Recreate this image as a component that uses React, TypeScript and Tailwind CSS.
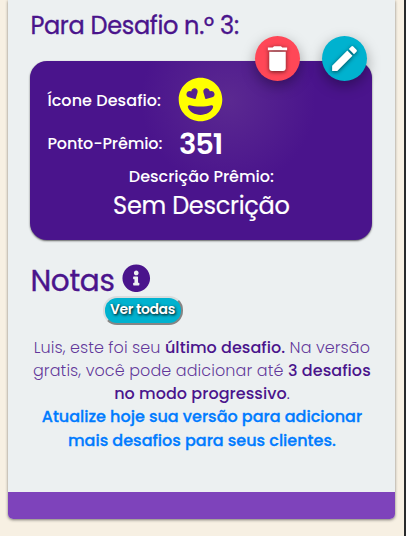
import React from 'react';
import { FaGrinHearts, FaInfoCircle } from 'react-icons/fa';
import { MdDelete, MdEdit } from 'react-icons/md';

function ActionButton({ label, className, children }: { label: string; className: string; children: React.ReactNode }) {
  return (
    <button
      aria-label={label}
      className={`flex h-[45px] w-[45px] items-center justify-center rounded-full text-white shadow-[0_5px_14px_rgba(0,0,0,0.35)] ${className}`}
    >
      {children}
    </button>
  );
}

function PrizeCard() {
  return (
    <section className="relative mt-[20px] h-[179px] w-[342px] rounded-[17px] bg-[#4a148c] bg-[radial-gradient(circle_at_58%_22%,#5b2991_0%,#4a148c_36%)] text-white shadow-[0_1px_2px_rgba(0,0,0,0.6)]">
      <div className="absolute -top-[25px] right-[5px] flex gap-[22px]">
        <ActionButton label="Excluir" className="bg-[#ff4757]">
          <MdDelete className="h-[33px] w-[33px] drop-shadow-[0_1px_2px_rgba(0,0,0,0.6)]" />
        </ActionButton>
        <ActionButton label="Editar" className="bg-[#00b2cf]">
          <MdEdit className="h-[33px] w-[33px] drop-shadow-[0_1px_2px_rgba(0,0,0,0.6)]" />
        </ActionButton>
      </div>
      <div className="flex h-[61px] items-end pl-[17px]">
        <span className="mb-[9px] w-[130.6px] text-[16px] leading-6 font-medium tracking-[0.07px]">Ícone Desafio:</span>
        <FaGrinHearts className="h-[45px] w-[45px] text-[#ffff00]" />
      </div>
      <div className="flex h-[43px] items-center pl-[17px]">
        <span className="w-[131.6px] text-[16px] font-medium tracking-[-0.1px]">Ponto-Prêmio:</span>
        <span className="pt-px text-[29px] leading-8 font-semibold tracking-[-1.1px]">351</span>
      </div>
      <p className="text-center text-[16px] leading-6 font-medium">Descrição Prêmio:</p>
      <p className="pt-px text-center text-[24px] leading-8 tracking-[-0.27px] [-webkit-text-stroke:0.2px]">Sem Descrição</p>
    </section>
  );
}

export default function App() {
  return (
    <div className="h-[536px] w-[406px] overflow-hidden border-r-2 border-[#292b2c] bg-[#f7f0e3] font-['Poppins','Inter',sans-serif] text-[#4a148c]">
      <main className="ml-2 flex h-[519px] w-[387px] flex-col rounded-b-[5px] bg-[#ecf0f1] shadow-[0_1px_3px_rgba(0,0,0,0.5)]">
        <div className="flex-1 pl-[22.4px]">
          <h2 className="pt-[10px] text-[24px] leading-[31px] font-normal tracking-[-0.32px] [-webkit-text-stroke:0.35px]">Para Desafio n.º 3:</h2>
          <PrizeCard />
          <div className="mt-[20px] flex h-[36px] items-center">
            <h2 className="w-[92px] pt-[5px] text-[29.5px] leading-9 font-normal tracking-[-0.3px] whitespace-nowrap [-webkit-text-stroke:0.35px]">Notas</h2>
            <FaInfoCircle className="h-[28.5px] w-[28.5px]" />
          </div>
          <button className="ml-[73px] block h-[29px] w-[80px] rounded-[14px] border-2 border-t-[#d9dcdd] border-r-[#858585] border-b-[#858585] border-l-[#d9dcdd] bg-[#00b2cf] pr-[2px] pb-[3px] text-[14px] leading-none font-semibold tracking-[-0.4px] whitespace-nowrap text-white [text-shadow:1px_1px_3px_#000]">
            Ver todas
          </button>
          <div className="mt-[11px] w-[343px] text-center text-[16px] leading-[23px] whitespace-nowrap">
            <p className="font-light tracking-[0.05px]"><span className="text-[#4a148c]/85">Luis, este foi seu</span> <b className="font-medium">último desafio.</b> <span className="text-[#4a148c]/85">Na versão</span></p>
            <p className="font-light tracking-[0.08px]"><span className="text-[#4a148c]/85">gratis, você pode adicionar até</span> <b className="font-medium">3 desafios</b></p>
            <p className="font-light tracking-[0.05px]"><b className="font-medium">no modo progressivo</b>.</p>
            <p className="font-medium text-[#007bff] [-webkit-text-stroke:0.3px]">Atualize hoje sua versão para adicionar</p>
            <p className="pt-px font-medium text-[#007bff] [-webkit-text-stroke:0.3px]">mais desafios para seus clientes.</p>
          </div>
        </div>
        <footer className="h-[27px] rounded-b-[5px] bg-[#7e43bb]" />
      </main>
    </div>
  );
}
